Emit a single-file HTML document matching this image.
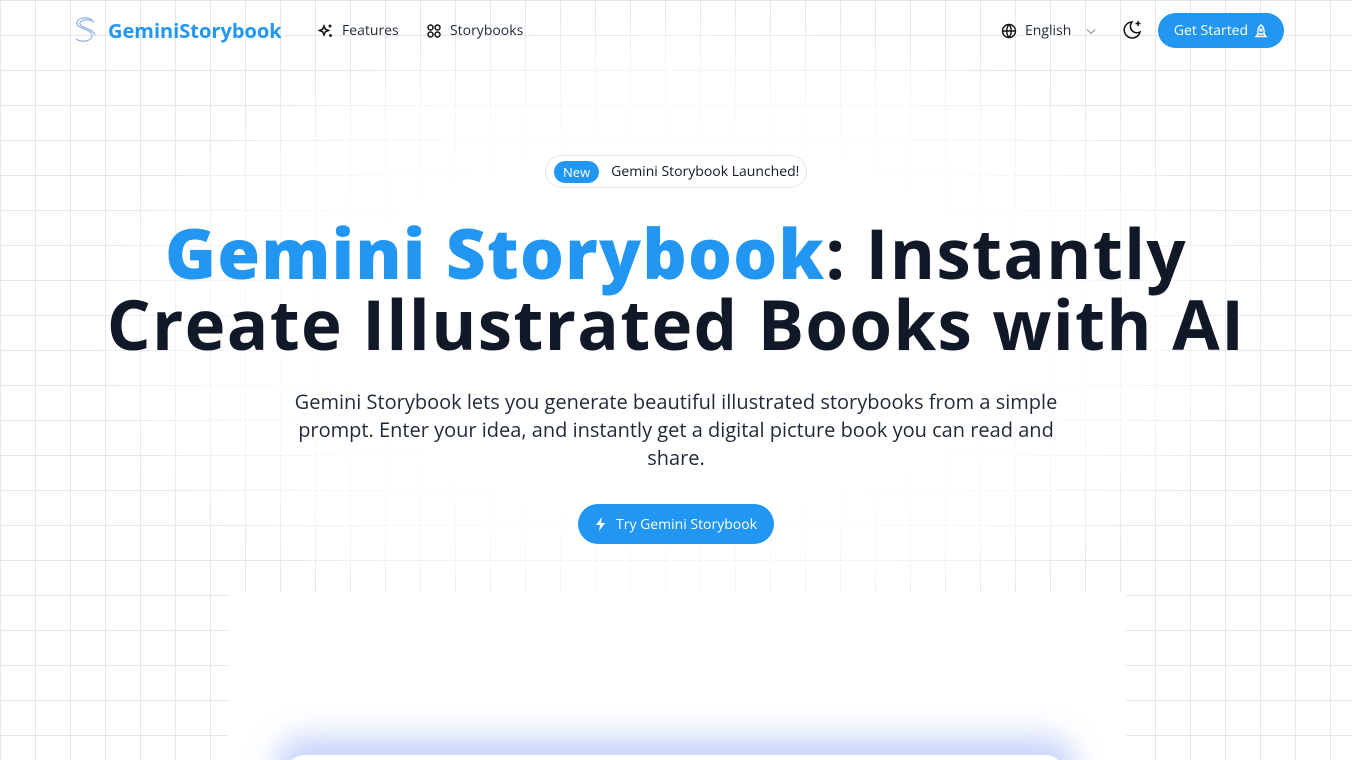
<!DOCTYPE html>
<html><head><meta charset="utf-8"><style>
*{margin:0;padding:0;box-sizing:border-box}
html,body{width:1352px;height:760px;overflow:hidden}
body{background:#fff;font-family:"Open Sans","Liberation Sans","DejaVu Sans",sans-serif;color:#111827;position:relative}
.grid{position:absolute;inset:0;background-image:linear-gradient(#e5e7eb 1px,transparent 1px),linear-gradient(90deg,#e5e7eb 1px,transparent 1px);background-size:35px 35px;background-position:0 0}
.fade{position:absolute;inset:0;background:radial-gradient(ellipse 600px 320px at 676px 330px,#fff 55%,rgba(255,255,255,0.6) 80%,rgba(255,255,255,0) 100%)}
.nav{position:absolute;top:0;left:0;right:0;height:60px}
.logo{position:absolute;left:72px;top:15px;display:flex;align-items:center;gap:10px;font-weight:700;font-size:20px;color:#2196f3}
.nl{position:absolute;top:21px;font-size:14px;color:#1f2937;display:flex;align-items:center;gap:8px;line-height:20px}
.btn{position:absolute;left:1158px;top:13px;width:126px;height:35px;border-radius:18px;background:#2196f3;color:#fff;font-size:14px;display:flex;align-items:center;justify-content:center;gap:6px}
.badge{position:absolute;left:545px;top:155px;width:262px;height:33px;border:1px solid #e5e7eb;border-radius:17px;background:#fff;display:flex;align-items:center;font-size:14px}
.badge span{background:#2196f3;color:#fff;border-radius:12px;padding:2px 9px;font-size:13px;margin:0 12px 0 8px}
h1{position:absolute;left:0;right:0;top:218px;text-align:center;font-size:69px;line-height:71px;font-weight:700;letter-spacing:1.3px;white-space:nowrap}
h1 b{color:#2196f3}
p{position:absolute;left:286px;width:780px;top:388px;text-align:center;font-size:20px;line-height:28px;color:#1f2937}
.cta{position:absolute;left:578px;top:504px;width:196px;height:40px;border-radius:20px;background:#2196f3;color:#fff;font-size:14px;display:flex;align-items:center;justify-content:center;gap:9px}
.card{position:absolute;left:228px;top:592px;width:898px;height:170px;background:#fff}
.glow{position:absolute;left:285px;top:755px;width:780px;height:40px;border-radius:20px;background:#fff;box-shadow:0 -8px 30px 10px rgba(90,130,240,0.35)}
</style></head><body>
<div class="grid"></div><div class="fade"></div>
<div class="nav">
<div class="logo"><svg width="26" height="30" viewBox="0 0 26 30" fill="none" stroke="#93b4e0" stroke-width="1.2"><path d="M20 5C14 1 4 3 5 9c1 5 14 5 15 11 1 6-10 8-16 4"/><path d="M22 7C16 3 7 5 8 9c1 4 14 5 15 11"/></svg>GeminiStorybook</div>
<div class="nl" style="left:318px"><svg width="16" height="16" viewBox="0 0 16 16" fill="none" stroke="#111" stroke-width="1.5"><path d="M6 3l1.3 3.2L10.5 7.5 7.3 8.8 6 12 4.7 8.8 1.5 7.5 4.7 6.2z"/><path d="M12 1.5v3M10.5 3h3M12.5 11v3M11 12.5h3"/></svg>Features</div>
<div class="nl" style="left:426px"><svg width="16" height="16" viewBox="0 0 16 16" fill="none" stroke="#111" stroke-width="1.5"><circle cx="4.5" cy="4.5" r="2.5"/><circle cx="11.5" cy="4.5" r="2.5"/><circle cx="4.5" cy="11.5" r="2.5"/><circle cx="11.5" cy="11.5" r="2.5"/></svg>Storybooks</div>
<div class="nl" style="left:1001px"><svg width="16" height="16" viewBox="0 0 16 16" fill="none" stroke="#111" stroke-width="1.4"><circle cx="8" cy="8" r="6.5"/><path d="M1.5 8h13M8 1.5c-3 3.5-3 9.5 0 13M8 1.5c3 3.5 3 9.5 0 13"/></svg>English<svg style="margin-left:6px" width="12" height="12" viewBox="0 0 12 12" fill="none" stroke="#9ca3af" stroke-width="1.3"><path d="M2 4.5l4 4 4-4"/></svg></div>
<svg style="position:absolute;left:1122px;top:19px" width="22" height="22" viewBox="0 0 22 22" fill="none" stroke="#111" stroke-width="1.5"><path d="M10 3a8 8 0 1 0 8 10A6.5 6.5 0 0 1 10 3z"/><path d="M16 2v5M13.5 4.5h5"/></svg>
<div class="btn">Get Started <svg width="14" height="14" viewBox="0 0 14 14" fill="none" stroke="#fff" stroke-width="1.4"><path d="M7 1C4 3 3.5 7 4 10h6c.5-3 0-7-3-9zM4 10l-2 2.5h10L10 10"/><circle cx="7" cy="6" r="1"/></svg></div>
</div>
<div class="badge"><span>New</span>Gemini Storybook Launched!</div>
<h1><b>Gemini Storybook</b>: Instantly<br>Create Illustrated Books with AI</h1>
<p>Gemini Storybook lets you generate beautiful illustrated storybooks from a simple prompt. Enter your idea, and instantly get a digital picture book you can read and share.</p>
<div class="cta"><svg width="12" height="14" viewBox="0 0 12 14"><path d="M7 0L1 8h4l-1 6 6-8H6z" fill="#fff"/></svg>Try Gemini Storybook</div>
<div class="card"></div>
<div class="glow"></div>
</body></html>
